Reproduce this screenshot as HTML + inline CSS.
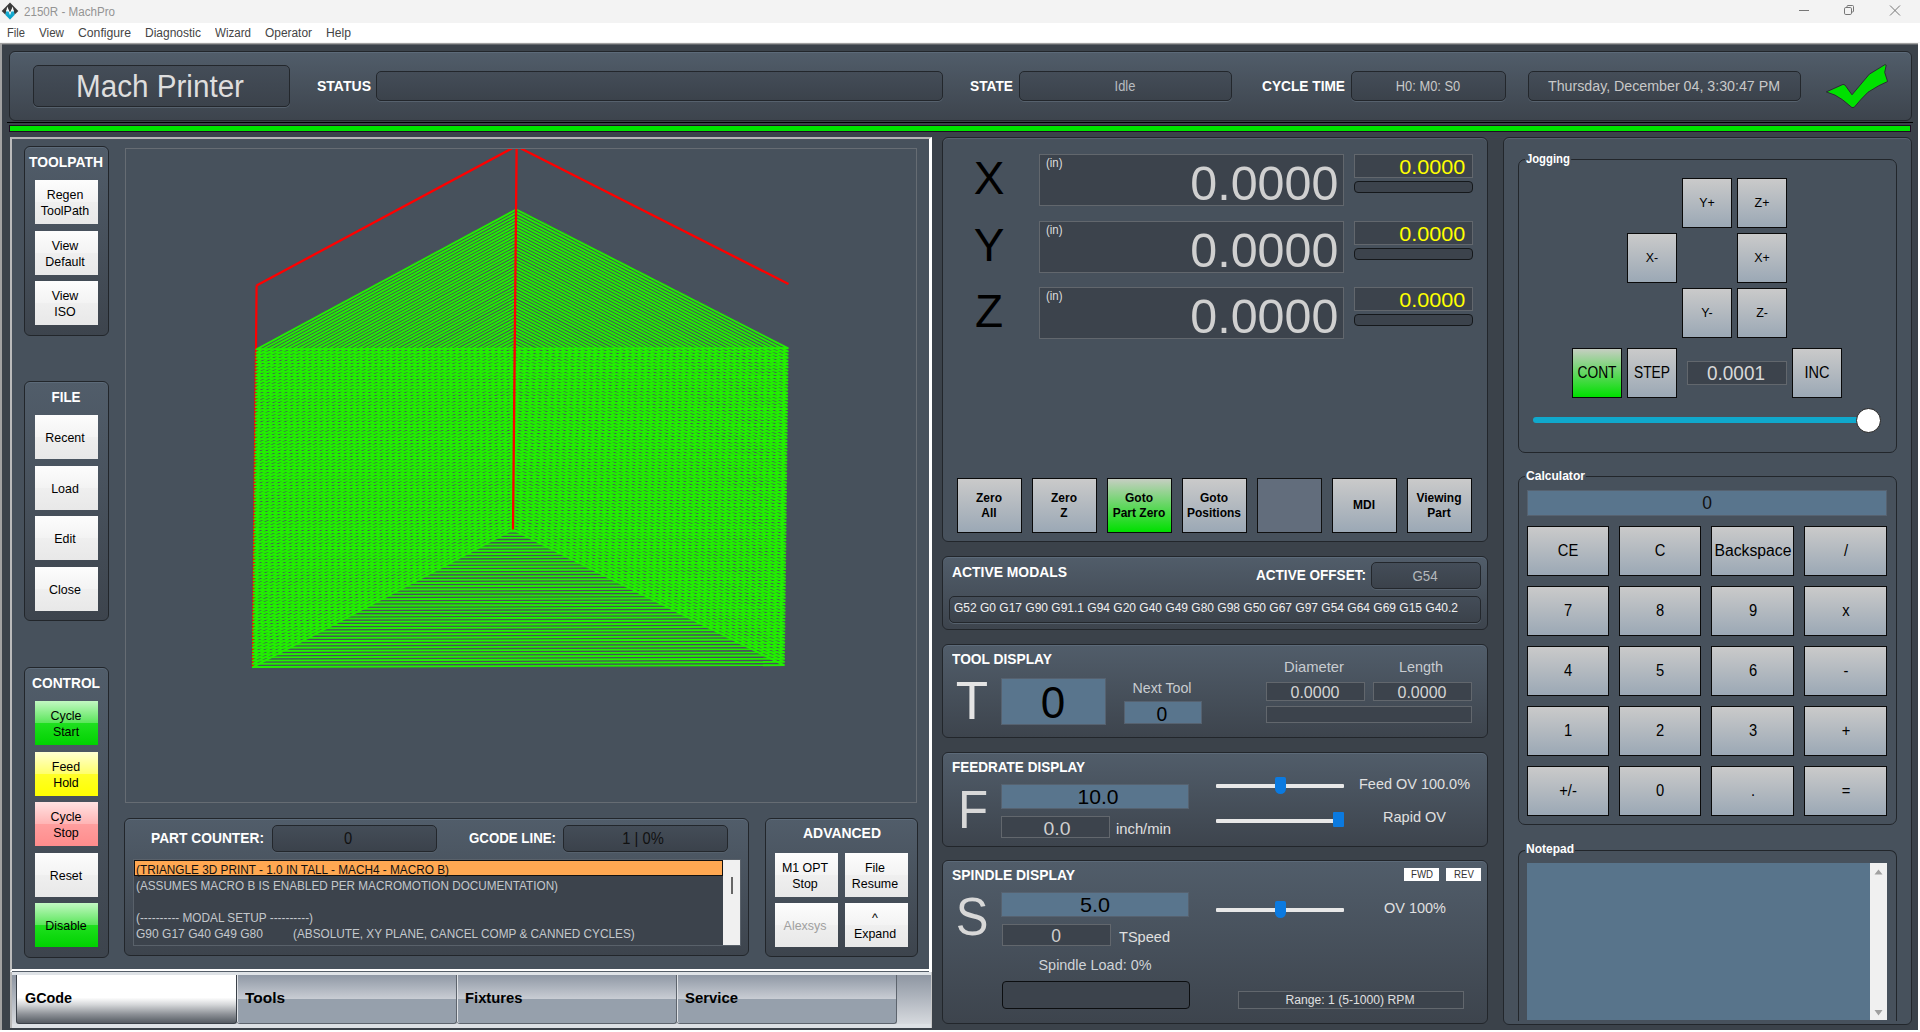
<!DOCTYPE html>
<html lang="en"><head><meta charset="utf-8"><title>2150R - MachPro</title>
<style>
html,body{margin:0;padding:0;}
body{width:1920px;height:1032px;overflow:hidden;position:relative;background:#fff;font-family:"Liberation Sans",sans-serif;}
div{position:absolute;box-sizing:border-box;}
.t{white-space:nowrap;}
.app{background:#3b424a;}
.panel{background:linear-gradient(#515d6a,#3d444d);border:1px solid #22262b;border-radius:6px;box-shadow:inset 0 1px 0 #5c6a79;}
.flat{background:#47515c;border:1px solid #22262b;border-radius:6px;box-shadow:inset 0 1px 0 #566270;}
.inset{background:linear-gradient(#444d58,#3b424b);border:1px solid #23272c;border-radius:5px;box-shadow:0 1px 0 #56616d;}
.dark{background:#3c434c;border:1px solid #62676d;}
.blue{background:#59758d;border:1px solid #566270;}
.wb{background:linear-gradient(#fdfdfd 0,#f3f3f3 50%,#efefef 50%,#e8e8e8 100%);}
.gb{background:linear-gradient(#cacaca,#9ba8b5);border:1px solid #0a0a0a;}
.grn{background:linear-gradient(#c2f8c2 0,#5ae65a 50%,#1fe01f 50%,#00d200 100%);}
.grnb{background:linear-gradient(#c6cec2,#00e000);border:1px solid #0a0a0a;}
.grp{border:1px solid #22262b;border-radius:7px;}
.c{display:flex;align-items:center;justify-content:center;text-align:center;}
svg{position:absolute;}

</style></head>
<body>
<div style="left:0px;top:0px;width:1920px;height:23px;background:#f3f3f3;"></div>
<div style="left:0px;top:23px;width:1920px;height:20px;background:#fff;"></div>
<svg style="left:0;top:0" width="21" height="23" viewBox="0 0 21 23"><defs><linearGradient id="ig" x1="0" y1="0" x2="0" y2="1"><stop offset="0" stop-color="#fff"/><stop offset="0.22" stop-color="#19acd2"/><stop offset="1" stop-color="#00a0c8"/></linearGradient></defs><path d="M10 2.6 L18.3 11 L10 19.3 L1.7 11 Z" fill="#3a3a3a"/><path d="M7.2 6.6 L10 12.4 L12.8 6.6 L14.5 15 L10 19.3 L5.5 15 Z" fill="#fff"/><path d="M6.2 10.3 L8.2 10.3 L10 15.2 L11.8 10.3 L13.8 10.3 L14.5 15 L10 19.4 L5.5 15 Z" fill="url(#ig)"/></svg>
<div class="t" style="top:6.28px;font-size:12.5px;line-height:12.5px;height:12.5px;color:#949494;left:24px;transform-origin:0 50%;transform:scaleX(0.9289);">2150R - MachPro</div>
<div class="t" style="top:27.07px;font-size:12.3px;line-height:12.3px;height:12.3px;color:#454545;left:7px;transform-origin:0 50%;transform:scaleX(0.9078);">File</div>
<div class="t" style="top:27.07px;font-size:12.3px;line-height:12.3px;height:12.3px;color:#454545;left:39px;transform-origin:0 50%;transform:scaleX(0.9456);">View</div>
<div class="t" style="top:27.07px;font-size:12.3px;line-height:12.3px;height:12.3px;color:#454545;left:78px;transform-origin:0 50%;transform:scaleX(0.9938);">Configure</div>
<div class="t" style="top:27.07px;font-size:12.3px;line-height:12.3px;height:12.3px;color:#454545;left:145px;transform-origin:0 50%;transform:scaleX(0.9752);">Diagnostic</div>
<div class="t" style="top:27.07px;font-size:12.3px;line-height:12.3px;height:12.3px;color:#454545;left:215px;transform-origin:0 50%;transform:scaleX(0.9408);">Wizard</div>
<div class="t" style="top:27.07px;font-size:12.3px;line-height:12.3px;height:12.3px;color:#454545;left:265px;transform-origin:0 50%;transform:scaleX(0.9684);">Operator</div>
<div class="t" style="top:27.07px;font-size:12.3px;line-height:12.3px;height:12.3px;color:#454545;left:326px;transform-origin:0 50%;transform:scaleX(0.9883);">Help</div>
<svg style="left:1790px;top:0" width="130" height="23" viewBox="0 0 130 23"><g fill="none" stroke="#777" stroke-width="1"><path d="M9 10.5 H19"/><rect x="54.5" y="7.5" width="7" height="7" rx="1.3"/><path d="M57 7.5 V6.5 Q57 5.5 58 5.5 H62.5 Q63.5 5.5 63.5 6.5 V11 Q63.5 12 62.5 12 H61.5"/><path d="M100 5.5 L110 15.5 M110 5.5 L100 15.5"/></g></svg>
<div style="left:0px;top:42px;width:1920px;height:1px;background:#f4f4f4;"></div>
<div class="app" style="left:0px;top:43px;width:1918px;height:987px;border-left:2px solid #a2a2a2;"></div>
<div style="left:0px;top:43px;width:1918px;height:1px;background:#a0a0a0;"></div>
<div style="left:2px;top:44px;width:1916px;height:1px;background:#62666b;"></div>
<div class="panel" style="left:9px;top:51px;width:1903px;height:70px;"></div>
<div class="inset" style="left:33px;top:65px;width:257px;height:42px;"></div>
<div class="t" style="top:71.06px;font-size:31px;line-height:31px;height:31px;color:#dedede;left:76px;transform-origin:0 50%;transform:scaleX(0.9560);">Mach Printer</div>
<div class="t" style="top:77.83px;font-size:15.5px;line-height:15.5px;height:15.5px;color:#fff;font-weight:700;left:317px;transform-origin:0 50%;transform:scaleX(0.9045);">STATUS</div>
<div class="inset" style="left:376px;top:71px;width:567px;height:30px;"></div>
<div class="t" style="top:77.83px;font-size:15.5px;line-height:15.5px;height:15.5px;color:#fff;font-weight:700;left:970px;transform-origin:0 50%;transform:scaleX(0.8863);">STATE</div>
<div class="inset" style="left:1019px;top:71px;width:213px;height:30px;"></div>
<div class="t" style="top:79.25px;font-size:14px;line-height:14px;height:14px;color:#b8bcc0;left:1125px;transform:translateX(-50%) scaleX(0.9200);">Idle</div>
<div class="t" style="top:77.83px;font-size:15.5px;line-height:15.5px;height:15.5px;color:#fff;font-weight:700;left:1262px;transform-origin:0 50%;transform:scaleX(0.8842);">CYCLE TIME</div>
<div class="inset" style="left:1351px;top:71px;width:155px;height:30px;"></div>
<div class="t" style="top:79.25px;font-size:14px;line-height:14px;height:14px;color:#c8c8c8;left:1428px;transform:translateX(-50%) scaleX(0.9200);">H0: M0: S0</div>
<div class="inset" style="left:1528px;top:71px;width:273px;height:30px;"></div>
<div class="t" style="top:79.25px;font-size:14px;line-height:14px;height:14px;color:#c8c8c8;left:1664px;transform:translateX(-50%) scaleX(1.0152);">Thursday, December 04, 3:30:47 PM</div>
<svg style="left:1822px;top:60px" width="72" height="52" viewBox="1822 60 72 52"><path d="M1826.3 91.9 L1843 84.4 L1845 85 L1852 94.8 L1869.3 74.2 L1885 64.6 L1886.2 65.2 L1884.7 72.4 L1887.6 81.5 L1878.6 85.8 L1868 92.2 L1861.2 99.2 L1854.2 107.3 L1852 107.6 L1842.6 99.8 L1835 95.1 Z" fill="#00e000" stroke="#2c2034" stroke-width="0.9" stroke-linejoin="round"/></svg>
<div style="left:7px;top:122px;width:1906px;height:1px;background:#000;"></div>
<div style="left:9px;top:125px;width:1902px;height:7px;background:#00e400;border:1px solid #1c0c22;"></div>
<div style="left:10px;top:137px;width:922px;height:835px;background:#47515c;border:2px solid #fff;border-top-color:#b4b4b4;border-left-color:#bcbcbc;border-right-width:3px;border-bottom-width:3px;"></div>
<div style="left:12px;top:971px;width:917px;height:1px;background:#555e68;"></div>
<div class="panel" style="left:24px;top:146px;width:85px;height:190px;"></div>
<div class="t" style="top:153.53px;font-size:15.5px;line-height:15.5px;height:15.5px;color:#fff;font-weight:700;left:66px;transform:translateX(-50%) scaleX(0.8951);">TOOLPATH</div>
<div class="wb" style="left:35px;top:180px;width:63px;height:44px;"></div>
<div class="t" style="top:188.49px;font-size:13.5px;line-height:13.5px;height:13.5px;color:#000;left:65px;transform:translateX(-50%) scaleX(0.9200);">Regen</div>
<div class="t" style="top:204.49px;font-size:13.5px;line-height:13.5px;height:13.5px;color:#000;left:65px;transform:translateX(-50%) scaleX(0.9200);">ToolPath</div>
<div class="wb" style="left:35px;top:231px;width:63px;height:44px;"></div>
<div class="t" style="top:239.49px;font-size:13.5px;line-height:13.5px;height:13.5px;color:#000;left:65px;transform:translateX(-50%) scaleX(0.9200);">View</div>
<div class="t" style="top:255.49px;font-size:13.5px;line-height:13.5px;height:13.5px;color:#000;left:65px;transform:translateX(-50%) scaleX(0.9200);">Default</div>
<div class="wb" style="left:35px;top:281px;width:63px;height:44px;"></div>
<div class="t" style="top:289.49px;font-size:13.5px;line-height:13.5px;height:13.5px;color:#000;left:65px;transform:translateX(-50%) scaleX(0.9200);">View</div>
<div class="t" style="top:305.49px;font-size:13.5px;line-height:13.5px;height:13.5px;color:#000;left:65px;transform:translateX(-50%) scaleX(0.9200);">ISO</div>
<div class="panel" style="left:24px;top:381px;width:85px;height:240px;"></div>
<div class="t" style="top:388.53px;font-size:15.5px;line-height:15.5px;height:15.5px;color:#fff;font-weight:700;left:66px;transform:translateX(-50%) scaleX(0.8633);">FILE</div>
<div class="wb" style="left:35px;top:415px;width:63px;height:44px;"></div>
<div class="t" style="top:431.49px;font-size:13.5px;line-height:13.5px;height:13.5px;color:#000;left:65px;transform:translateX(-50%) scaleX(0.9200);">Recent</div>
<div class="wb" style="left:35px;top:466px;width:63px;height:44px;"></div>
<div class="t" style="top:482.49px;font-size:13.5px;line-height:13.5px;height:13.5px;color:#000;left:65px;transform:translateX(-50%) scaleX(0.9200);">Load</div>
<div class="wb" style="left:35px;top:516px;width:63px;height:44px;"></div>
<div class="t" style="top:532.49px;font-size:13.5px;line-height:13.5px;height:13.5px;color:#000;left:65px;transform:translateX(-50%) scaleX(0.9200);">Edit</div>
<div class="wb" style="left:35px;top:567px;width:63px;height:44px;"></div>
<div class="t" style="top:583.49px;font-size:13.5px;line-height:13.5px;height:13.5px;color:#000;left:65px;transform:translateX(-50%) scaleX(0.9200);">Close</div>
<div class="panel" style="left:24px;top:667px;width:85px;height:291px;"></div>
<div class="t" style="top:674.53px;font-size:15.5px;line-height:15.5px;height:15.5px;color:#fff;font-weight:700;left:66px;transform:translateX(-50%) scaleX(0.8873);">CONTROL</div>
<div class="grn" style="left:35px;top:701px;width:63px;height:44px;"></div>
<div class="t" style="top:709.49px;font-size:13.5px;line-height:13.5px;height:13.5px;color:#000;left:65.5px;transform:translateX(-50%) scaleX(0.9200);">Cycle</div>
<div class="t" style="top:725.49px;font-size:13.5px;line-height:13.5px;height:13.5px;color:#000;left:65.5px;transform:translateX(-50%) scaleX(0.9200);">Start</div>
<div style="left:35px;top:752px;width:63px;height:44px;background:linear-gradient(#ffffd2 0,#ffff6a 50%,#ffff28 50%,#ffff00 100%);"></div>
<div class="t" style="top:760.49px;font-size:13.5px;line-height:13.5px;height:13.5px;color:#000;left:65.5px;transform:translateX(-50%) scaleX(0.9200);">Feed</div>
<div class="t" style="top:776.49px;font-size:13.5px;line-height:13.5px;height:13.5px;color:#000;left:65.5px;transform:translateX(-50%) scaleX(0.9200);">Hold</div>
<div style="left:35px;top:802px;width:63px;height:44px;background:linear-gradient(#ffe2e2 0,#ffb4b4 50%,#ff9e9e 50%,#ff8c8c 100%);"></div>
<div class="t" style="top:810.49px;font-size:13.5px;line-height:13.5px;height:13.5px;color:#000;left:65.5px;transform:translateX(-50%) scaleX(0.9200);">Cycle</div>
<div class="t" style="top:826.49px;font-size:13.5px;line-height:13.5px;height:13.5px;color:#000;left:65.5px;transform:translateX(-50%) scaleX(0.9200);">Stop</div>
<div class="wb" style="left:35px;top:853px;width:63px;height:44px;"></div>
<div class="t" style="top:869.49px;font-size:13.5px;line-height:13.5px;height:13.5px;color:#000;left:65.5px;transform:translateX(-50%) scaleX(0.9200);">Reset</div>
<div class="grn" style="left:35px;top:903px;width:63px;height:44px;"></div>
<div class="t" style="top:919.49px;font-size:13.5px;line-height:13.5px;height:13.5px;color:#000;left:65.5px;transform:translateX(-50%) scaleX(0.9200);">Disable</div>
<div style="left:125px;top:148px;width:792px;height:655px;border:1px solid #666c73;background:#47515c;"></div>
<svg style="left:126px;top:149px" width="790" height="653" viewBox="126 149 790 653">
<path d="M256.6 285.5 L252.9 667" fill="none" stroke="#ff0000" stroke-width="2.2"/>
<g fill="none" stroke="#22f000" stroke-width="1.9" stroke-linejoin="round">
<path d="M512.7 529.4L252.8 667.0L784.0 665.1Z"/>
<path d="M512.7 526.2L252.8 663.8L784.0 661.9Z"/>
<path d="M512.8 522.9L252.9 660.6L784.1 658.7Z"/>
<path d="M512.8 519.7L252.9 657.4L784.1 655.5Z"/>
<path d="M512.8 516.5L252.9 654.2L784.2 652.3Z"/>
<path d="M512.9 513.2L253.0 651.0L784.2 649.1Z"/>
<path d="M512.9 510.0L253.0 647.7L784.2 645.9Z"/>
<path d="M512.9 506.8L253.1 644.5L784.3 642.7Z"/>
<path d="M513.0 503.5L253.1 641.3L784.3 639.5Z"/>
<path d="M513.0 500.3L253.1 638.1L784.3 636.3Z"/>
<path d="M513.1 497.1L253.2 634.9L784.4 633.1Z"/>
<path d="M513.1 493.9L253.2 631.7L784.4 629.9Z"/>
<path d="M513.1 490.6L253.2 628.5L784.5 626.7Z"/>
<path d="M513.2 487.4L253.3 625.3L784.5 623.5Z"/>
<path d="M513.2 484.2L253.3 622.1L784.5 620.3Z"/>
<path d="M513.2 480.9L253.4 618.9L784.6 617.1Z"/>
<path d="M513.3 477.7L253.4 615.7L784.6 613.9Z"/>
<path d="M513.3 474.5L253.4 612.4L784.7 610.7Z"/>
<path d="M513.3 471.2L253.5 609.2L784.7 607.5Z"/>
<path d="M513.4 468.0L253.5 606.0L784.7 604.3Z"/>
<path d="M513.4 464.8L253.5 602.8L784.8 601.1Z"/>
<path d="M513.4 461.5L253.6 599.6L784.8 597.9Z"/>
<path d="M513.5 458.3L253.6 596.4L784.8 594.7Z"/>
<path d="M513.5 455.1L253.7 593.2L784.9 591.5Z"/>
<path d="M513.5 451.8L253.7 590.0L784.9 588.3Z"/>
<path d="M513.6 448.6L253.7 586.8L785.0 585.1Z"/>
<path d="M513.6 445.4L253.8 583.6L785.0 581.9Z"/>
<path d="M513.7 442.2L253.8 580.4L785.0 578.7Z"/>
<path d="M513.7 438.9L253.8 577.1L785.1 575.5Z"/>
<path d="M513.7 435.7L253.9 573.9L785.1 572.3Z"/>
<path d="M513.8 432.5L253.9 570.7L785.2 569.1Z"/>
<path d="M513.8 429.2L254.0 567.5L785.2 565.9Z"/>
<path d="M513.8 426.0L254.0 564.3L785.2 562.7Z"/>
<path d="M513.9 422.8L254.0 561.1L785.3 559.5Z"/>
<path d="M513.9 419.5L254.1 557.9L785.3 556.3Z"/>
<path d="M513.9 416.3L254.1 554.7L785.3 553.1Z"/>
<path d="M514.0 413.1L254.1 551.5L785.4 549.9Z"/>
<path d="M514.0 409.8L254.2 548.3L785.4 546.7Z"/>
<path d="M514.0 406.6L254.2 545.1L785.5 543.5Z"/>
<path d="M514.1 403.4L254.3 541.8L785.5 540.3Z"/>
<path d="M514.1 400.1L254.3 538.6L785.5 537.1Z"/>
<path d="M514.1 396.9L254.3 535.4L785.6 533.9Z"/>
<path d="M514.2 393.7L254.4 532.2L785.6 530.7Z"/>
<path d="M514.2 390.5L254.4 529.0L785.7 527.5Z"/>
<path d="M514.3 387.2L254.4 525.8L785.7 524.3Z"/>
<path d="M514.3 384.0L254.5 522.6L785.7 521.1Z"/>
<path d="M514.3 380.8L254.5 519.4L785.8 517.9Z"/>
<path d="M514.4 377.5L254.6 516.2L785.8 514.7Z"/>
<path d="M514.4 374.3L254.6 513.0L785.8 511.5Z"/>
<path d="M514.4 371.1L254.6 509.8L785.9 508.3Z"/>
<path d="M514.5 367.8L254.7 506.5L785.9 505.0Z"/>
<path d="M514.5 364.6L254.7 503.3L786.0 501.8Z"/>
<path d="M514.5 361.4L254.7 500.1L786.0 498.6Z"/>
<path d="M514.6 358.1L254.8 496.9L786.0 495.4Z"/>
<path d="M514.6 354.9L254.8 493.7L786.1 492.2Z"/>
<path d="M514.6 351.7L254.9 490.5L786.1 489.0Z"/>
<path d="M514.7 348.4L254.9 487.3L786.1 485.8Z"/>
<path d="M514.7 345.2L254.9 484.1L786.2 482.6Z"/>
<path d="M514.8 342.0L255.0 480.9L786.2 479.4Z"/>
<path d="M514.8 338.8L255.0 477.7L786.3 476.2Z"/>
<path d="M514.8 335.5L255.0 474.5L786.3 473.0Z"/>
<path d="M514.9 332.3L255.1 471.2L786.3 469.8Z"/>
<path d="M514.9 329.1L255.1 468.0L786.4 466.6Z"/>
<path d="M514.9 325.8L255.2 464.8L786.4 463.4Z"/>
<path d="M515.0 322.6L255.2 461.6L786.5 460.2Z"/>
<path d="M515.0 319.4L255.2 458.4L786.5 457.0Z"/>
<path d="M515.0 316.1L255.3 455.2L786.5 453.8Z"/>
<path d="M515.1 312.9L255.3 452.0L786.6 450.6Z"/>
<path d="M515.1 309.7L255.3 448.8L786.6 447.4Z"/>
<path d="M515.1 306.4L255.4 445.6L786.6 444.2Z"/>
<path d="M515.2 303.2L255.4 442.4L786.7 441.0Z"/>
<path d="M515.2 300.0L255.5 439.2L786.7 437.8Z"/>
<path d="M515.2 296.7L255.5 435.9L786.8 434.6Z"/>
<path d="M515.3 293.5L255.5 432.7L786.8 431.4Z"/>
<path d="M515.3 290.3L255.6 429.5L786.8 428.2Z"/>
<path d="M515.4 287.1L255.6 426.3L786.9 425.0Z"/>
<path d="M515.4 283.8L255.6 423.1L786.9 421.8Z"/>
<path d="M515.4 280.6L255.7 419.9L787.0 418.6Z"/>
<path d="M515.5 277.4L255.7 416.7L787.0 415.4Z"/>
<path d="M515.5 274.1L255.8 413.5L787.0 412.2Z"/>
<path d="M515.5 270.9L255.8 410.3L787.1 409.0Z"/>
<path d="M515.6 267.7L255.8 407.1L787.1 405.8Z"/>
<path d="M515.6 264.4L255.9 403.9L787.1 402.6Z"/>
<path d="M515.6 261.2L255.9 400.6L787.2 399.4Z"/>
<path d="M515.7 258.0L255.9 397.4L787.2 396.2Z"/>
<path d="M515.7 254.7L256.0 394.2L787.3 393.0Z"/>
<path d="M515.7 251.5L256.0 391.0L787.3 389.8Z"/>
<path d="M515.8 248.3L256.1 387.8L787.3 386.6Z"/>
<path d="M515.8 245.0L256.1 384.6L787.4 383.4Z"/>
<path d="M515.8 241.8L256.1 381.4L787.4 380.2Z"/>
<path d="M515.9 238.6L256.2 378.2L787.5 377.0Z"/>
<path d="M515.9 235.4L256.2 375.0L787.5 373.8Z"/>
<path d="M516.0 232.1L256.2 371.8L787.5 370.6Z"/>
<path d="M516.0 228.9L256.3 368.6L787.6 367.4Z"/>
<path d="M516.0 225.7L256.3 365.3L787.6 364.2Z"/>
<path d="M516.1 222.4L256.4 362.1L787.6 361.0Z"/>
<path d="M516.1 219.2L256.4 358.9L787.7 357.8Z"/>
<path d="M516.1 216.0L256.4 355.7L787.7 354.6Z"/>
<path d="M516.2 212.7L256.5 352.5L787.8 351.4Z"/>
<path d="M516.2 209.5L256.5 349.3L787.8 348.2Z"/>
</g>
<g fill="none" stroke="#ff0000" stroke-width="2.3">
<path d="M788.5 284 L521 148.5 M516.7 140 L513 529.4 M516.3 146 L256.6 285.5"/>
</g></svg>
<div class="panel" style="left:124px;top:818px;width:625px;height:138px;"></div>
<div class="t" style="top:829.73px;font-size:15.5px;line-height:15.5px;height:15.5px;color:#fff;font-weight:700;left:151px;transform-origin:0 50%;transform:scaleX(0.8887);">PART COUNTER:</div>
<div class="inset" style="left:272px;top:825px;width:165px;height:27px;"></div>
<div class="t" style="top:831.29px;font-size:16px;line-height:16px;height:16px;color:#111;left:348px;transform:translateX(-50%) scaleX(0.9200);">0</div>
<div class="t" style="top:829.73px;font-size:15.5px;line-height:15.5px;height:15.5px;color:#fff;font-weight:700;left:469px;transform-origin:0 50%;transform:scaleX(0.8561);">GCODE LINE:</div>
<div class="inset" style="left:563px;top:825px;width:165px;height:27px;"></div>
<div class="t" style="top:831.29px;font-size:16px;line-height:16px;height:16px;color:#111;left:643px;transform:translateX(-50%) scaleX(0.9200);">1 | 0%</div>
<div style="left:133px;top:859px;width:608px;height:87px;background:#3c434c;border:1px solid #59616a;"></div>
<div style="left:134px;top:860px;width:589px;height:16px;background:#ffa852;border:1px solid #111;"></div>
<div style="left:723px;top:860px;width:17px;height:85px;background:#f0f0f0;"></div>
<div style="left:731px;top:877px;width:2px;height:17px;background:#666;"></div>
<div class="t" style="top:863.77px;font-size:12.5px;line-height:12.5px;height:12.5px;color:#111;left:136px;transform-origin:0 50%;transform:scaleX(0.9441);">(TRIANGLE 3D PRINT - 1.0 IN TALL - MACH4 - MACRO B)</div>
<div class="t" style="top:880.27px;font-size:12.5px;line-height:12.5px;height:12.5px;color:#c4c8cc;left:136px;transform-origin:0 50%;transform:scaleX(0.9387);">(ASSUMES MACRO B IS ENABLED PER MACROMOTION DOCUMENTATION)</div>
<div class="t" style="top:912.27px;font-size:12.5px;line-height:12.5px;height:12.5px;color:#c4c8cc;left:136px;transform-origin:0 50%;transform:scaleX(0.9443);">(---------- MODAL SETUP ----------)</div>
<div class="t" style="top:928.27px;font-size:12.5px;line-height:12.5px;height:12.5px;color:#c4c8cc;left:136px;transform-origin:0 50%;transform:scaleX(0.9619);">G90 G17 G40 G49 G80</div>
<div class="t" style="top:928.27px;font-size:12.5px;line-height:12.5px;height:12.5px;color:#c4c8cc;left:293.3px;transform-origin:0 50%;transform:scaleX(0.9429);">(ABSOLUTE, XY PLANE, CANCEL COMP &amp; CANNED CYCLES)</div>
<div class="panel" style="left:765px;top:818px;width:153px;height:139px;"></div>
<div class="t" style="top:825.23px;font-size:15.5px;line-height:15.5px;height:15.5px;color:#fff;font-weight:700;left:842px;transform:translateX(-50%) scaleX(0.8996);">ADVANCED</div>
<div class="wb" style="left:775px;top:853px;width:63px;height:44px;"></div>
<div class="t" style="top:860.99px;font-size:13.5px;line-height:13.5px;height:13.5px;color:#000;left:805px;transform:translateX(-50%) scaleX(0.9200);">M1 OPT</div>
<div class="t" style="top:876.99px;font-size:13.5px;line-height:13.5px;height:13.5px;color:#000;left:805px;transform:translateX(-50%) scaleX(0.9200);">Stop</div>
<div class="wb" style="left:845px;top:853px;width:63px;height:44px;"></div>
<div class="t" style="top:860.99px;font-size:13.5px;line-height:13.5px;height:13.5px;color:#000;left:875px;transform:translateX(-50%) scaleX(0.9200);">File</div>
<div class="t" style="top:876.99px;font-size:13.5px;line-height:13.5px;height:13.5px;color:#000;left:875px;transform:translateX(-50%) scaleX(0.9200);">Resume</div>
<div class="wb" style="left:775px;top:903px;width:63px;height:44px;"></div>
<div class="t" style="top:919.49px;font-size:13.5px;line-height:13.5px;height:13.5px;color:#a0a0a0;left:805px;transform:translateX(-50%) scaleX(0.9200);">Alexsys</div>
<div class="wb" style="left:845px;top:903px;width:63px;height:44px;"></div>
<div class="t" style="top:911.49px;font-size:13.5px;line-height:13.5px;height:13.5px;color:#000;left:875px;transform:translateX(-50%) scaleX(0.9200);">^</div>
<div class="t" style="top:927.49px;font-size:13.5px;line-height:13.5px;height:13.5px;color:#000;left:875px;transform:translateX(-50%) scaleX(0.9200);">Expand</div>
<div style="left:10px;top:972px;width:922px;height:56px;background:linear-gradient(#dfe3e7 0,#dfe3e7 3px,#8e96a2 3px,#dcdfe3 100%);border-left:2px solid #b8b8b8;border-right:1px solid #c8c8c8;"></div>
<div style="left:12px;top:1024px;width:919px;height:4px;background:#dde1e5;"></div>
<div style="left:16px;top:975px;width:221px;height:49px;background:linear-gradient(#fff 47%,#d4d6d8 62%,#8c9096 82%,#555b62 100%);border:1px solid #3a4048;border-top:none;border-radius:0 0 3px 3px;"></div>
<div class="t" style="top:990.13px;font-size:15.5px;line-height:15.5px;height:15.5px;color:#000;font-weight:700;left:24.5px;transform-origin:0 50%;transform:scaleX(0.9250);">GCode</div>
<div style="left:237px;top:975px;width:220px;height:49px;background:linear-gradient(#8f98a5,#c9cdd4 50%,#96a0ac 50%,#96a0ac 100%);border-right:1px solid #5d646d;border-bottom:1px solid #5d646d;border-radius:0 0 3px 3px;box-shadow:inset 1px 0 0 #dfe2e6;"></div>
<div class="t" style="top:990.13px;font-size:15.5px;line-height:15.5px;height:15.5px;color:#000;font-weight:700;left:244.5px;transform-origin:0 50%;transform:scaleX(0.9953);">Tools</div>
<div style="left:457px;top:975px;width:220px;height:49px;background:linear-gradient(#8f98a5,#c9cdd4 50%,#96a0ac 50%,#96a0ac 100%);border-right:1px solid #5d646d;border-bottom:1px solid #5d646d;border-radius:0 0 3px 3px;box-shadow:inset 1px 0 0 #dfe2e6;"></div>
<div class="t" style="top:990.13px;font-size:15.5px;line-height:15.5px;height:15.5px;color:#000;font-weight:700;left:464.5px;transform-origin:0 50%;transform:scaleX(0.9534);">Fixtures</div>
<div style="left:677px;top:975px;width:220px;height:49px;background:linear-gradient(#8f98a5,#c9cdd4 50%,#96a0ac 50%,#96a0ac 100%);border-right:1px solid #5d646d;border-bottom:1px solid #5d646d;border-radius:0 0 3px 3px;box-shadow:inset 1px 0 0 #dfe2e6;"></div>
<div class="t" style="top:990.13px;font-size:15.5px;line-height:15.5px;height:15.5px;color:#000;font-weight:700;left:684.5px;transform-origin:0 50%;transform:scaleX(0.9606);">Service</div>
<div class="flat" style="left:942px;top:137px;width:546px;height:405px;"></div>
<div class="t" style="top:155.33px;font-size:46px;line-height:46px;height:46px;color:#000;left:989px;transform:translateX(-50%) scaleX(1.0000);">X</div>
<div class="dark" style="left:1039px;top:154px;width:305px;height:52px;"></div>
<div class="t" style="top:157.02px;font-size:12px;line-height:12px;height:12px;color:#ddd;left:1045.5px;transform-origin:0 50%;transform:scaleX(0.9500);">(in)</div>
<div class="t" style="top:158.62px;font-size:48.5px;line-height:48.5px;height:48.5px;color:#d0d0d0;right:582px;transform-origin:100% 50%;transform:scaleX(0.9977);">0.0000</div>
<div class="dark" style="left:1354px;top:154px;width:119px;height:24px;"></div>
<div class="t" style="top:157.06px;font-size:20px;line-height:20px;height:20px;color:#ffff00;right:455px;transform-origin:100% 50%;transform:scaleX(1.0789);">0.0000</div>
<div style="left:1354px;top:181px;width:119px;height:12px;background:#3c434c;border:1px solid #15181b;border-radius:4px;"></div>
<div class="t" style="top:222.33px;font-size:46px;line-height:46px;height:46px;color:#000;left:989px;transform:translateX(-50%) scaleX(1.0000);">Y</div>
<div class="dark" style="left:1039px;top:221px;width:305px;height:52px;"></div>
<div class="t" style="top:224.02px;font-size:12px;line-height:12px;height:12px;color:#ddd;left:1045.5px;transform-origin:0 50%;transform:scaleX(0.9500);">(in)</div>
<div class="t" style="top:225.62px;font-size:48.5px;line-height:48.5px;height:48.5px;color:#d0d0d0;right:582px;transform-origin:100% 50%;transform:scaleX(0.9977);">0.0000</div>
<div class="dark" style="left:1354px;top:221px;width:119px;height:24px;"></div>
<div class="t" style="top:224.06px;font-size:20px;line-height:20px;height:20px;color:#ffff00;right:455px;transform-origin:100% 50%;transform:scaleX(1.0789);">0.0000</div>
<div style="left:1354px;top:248px;width:119px;height:12px;background:#3c434c;border:1px solid #15181b;border-radius:4px;"></div>
<div class="t" style="top:288.33px;font-size:46px;line-height:46px;height:46px;color:#000;left:989px;transform:translateX(-50%) scaleX(1.0000);">Z</div>
<div class="dark" style="left:1039px;top:287px;width:305px;height:52px;"></div>
<div class="t" style="top:290.02px;font-size:12px;line-height:12px;height:12px;color:#ddd;left:1045.5px;transform-origin:0 50%;transform:scaleX(0.9500);">(in)</div>
<div class="t" style="top:291.62px;font-size:48.5px;line-height:48.5px;height:48.5px;color:#d0d0d0;right:582px;transform-origin:100% 50%;transform:scaleX(0.9977);">0.0000</div>
<div class="dark" style="left:1354px;top:287px;width:119px;height:24px;"></div>
<div class="t" style="top:290.06px;font-size:20px;line-height:20px;height:20px;color:#ffff00;right:455px;transform-origin:100% 50%;transform:scaleX(1.0789);">0.0000</div>
<div style="left:1354px;top:314px;width:119px;height:12px;background:#3c434c;border:1px solid #15181b;border-radius:4px;"></div>
<div class="gb" style="left:957px;top:478px;width:65px;height:55px;"></div>
<div class="t" style="top:490.93px;font-size:13px;line-height:13px;height:13px;color:#000;font-weight:700;left:989px;transform:translateX(-50%) scaleX(0.9200);">Zero</div>
<div class="t" style="top:505.93px;font-size:13px;line-height:13px;height:13px;color:#000;font-weight:700;left:989px;transform:translateX(-50%) scaleX(0.9200);">All</div>
<div class="gb" style="left:1032px;top:478px;width:65px;height:55px;"></div>
<div class="t" style="top:490.93px;font-size:13px;line-height:13px;height:13px;color:#000;font-weight:700;left:1064px;transform:translateX(-50%) scaleX(0.9200);">Zero</div>
<div class="t" style="top:505.93px;font-size:13px;line-height:13px;height:13px;color:#000;font-weight:700;left:1064px;transform:translateX(-50%) scaleX(0.9200);">Z</div>
<div class="grnb" style="left:1107px;top:478px;width:65px;height:55px;"></div>
<div class="t" style="top:490.93px;font-size:13px;line-height:13px;height:13px;color:#000;font-weight:700;left:1139px;transform:translateX(-50%) scaleX(0.9200);">Goto</div>
<div class="t" style="top:505.93px;font-size:13px;line-height:13px;height:13px;color:#000;font-weight:700;left:1139px;transform:translateX(-50%) scaleX(0.9200);">Part Zero</div>
<div class="gb" style="left:1182px;top:478px;width:65px;height:55px;"></div>
<div class="t" style="top:490.93px;font-size:13px;line-height:13px;height:13px;color:#000;font-weight:700;left:1214px;transform:translateX(-50%) scaleX(0.9200);">Goto</div>
<div class="t" style="top:505.93px;font-size:13px;line-height:13px;height:13px;color:#000;font-weight:700;left:1214px;transform:translateX(-50%) scaleX(0.9200);">Positions</div>
<div style="left:1257px;top:478px;width:65px;height:55px;background:#626d7c;border:1px solid #111;"></div>
<div class="gb" style="left:1332px;top:478px;width:65px;height:55px;"></div>
<div class="t" style="top:498.43px;font-size:13px;line-height:13px;height:13px;color:#000;font-weight:700;left:1364px;transform:translateX(-50%) scaleX(0.9200);">MDI</div>
<div class="gb" style="left:1407px;top:478px;width:65px;height:55px;"></div>
<div class="t" style="top:490.93px;font-size:13px;line-height:13px;height:13px;color:#000;font-weight:700;left:1439px;transform:translateX(-50%) scaleX(0.9200);">Viewing</div>
<div class="t" style="top:505.93px;font-size:13px;line-height:13px;height:13px;color:#000;font-weight:700;left:1439px;transform:translateX(-50%) scaleX(0.9200);">Part</div>
<div class="panel" style="left:942px;top:556px;width:546px;height:74px;"></div>
<div class="t" style="top:563.93px;font-size:15.5px;line-height:15.5px;height:15.5px;color:#fff;font-weight:700;left:952px;transform-origin:0 50%;transform:scaleX(0.8962);">ACTIVE MODALS</div>
<div class="t" style="top:566.93px;font-size:15.5px;line-height:15.5px;height:15.5px;color:#fff;font-weight:700;left:1256px;transform-origin:0 50%;transform:scaleX(0.8749);">ACTIVE OFFSET:</div>
<div class="inset" style="left:1371px;top:562px;width:110px;height:27px;"></div>
<div class="t" style="top:569.01px;font-size:14.5px;line-height:14.5px;height:14.5px;color:#b4b8bc;left:1425px;transform:translateX(-50%) scaleX(0.9200);">G54</div>
<div class="inset" style="left:949px;top:596px;width:532px;height:27px;"></div>
<div class="t" style="top:601.98px;font-size:12.5px;line-height:12.5px;height:12.5px;color:#f0f0f0;left:954px;transform-origin:0 50%;transform:scaleX(0.9594);">G52 G0 G17 G90 G91.1 G94 G20 G40 G49 G80 G98 G50 G67 G97 G54 G64 G69 G15 G40.2</div>
<div class="panel" style="left:942px;top:644px;width:546px;height:94px;"></div>
<div class="t" style="top:651.13px;font-size:15.5px;line-height:15.5px;height:15.5px;color:#fff;font-weight:700;left:952px;transform-origin:0 50%;transform:scaleX(0.8884);">TOOL DISPLAY</div>
<div class="t" style="top:673.95px;font-size:53px;line-height:53px;height:53px;color:#e4e4e4;left:972px;transform:translateX(-50%) scaleX(1.0000);">T</div>
<div class="blue" style="left:1001px;top:678px;width:105px;height:47px;"></div>
<div class="t" style="top:681.29px;font-size:44px;line-height:44px;height:44px;color:#000;left:1053px;transform:translateX(-50%) scaleX(1.0000);">0</div>
<div class="t" style="top:679.97px;font-size:15px;line-height:15px;height:15px;color:#c8ccd0;left:1162px;transform:translateX(-50%) scaleX(0.9476);">Next Tool</div>
<div class="blue" style="left:1124px;top:701px;width:78px;height:23px;"></div>
<div class="t" style="top:703.38px;font-size:21px;line-height:21px;height:21px;color:#000;left:1162px;transform:translateX(-50%) scaleX(0.9200);">0</div>
<div class="t" style="top:658.57px;font-size:15px;line-height:15px;height:15px;color:#c8ccd0;left:1314px;transform:translateX(-50%) scaleX(0.9859);">Diameter</div>
<div class="t" style="top:658.57px;font-size:15px;line-height:15px;height:15px;color:#c8ccd0;left:1421px;transform:translateX(-50%) scaleX(0.9588);">Length</div>
<div class="dark" style="left:1266px;top:682px;width:99px;height:19px;"></div>
<div class="t" style="top:685.29px;font-size:16px;line-height:16px;height:16px;color:#d4d4d4;left:1315px;transform:translateX(-50%) scaleX(1.0013);">0.0000</div>
<div class="dark" style="left:1373px;top:682px;width:99px;height:19px;"></div>
<div class="t" style="top:685.29px;font-size:16px;line-height:16px;height:16px;color:#d4d4d4;left:1422px;transform:translateX(-50%) scaleX(1.0013);">0.0000</div>
<div class="dark" style="left:1266px;top:706px;width:206px;height:17px;"></div>
<div class="panel" style="left:942px;top:752px;width:546px;height:95px;"></div>
<div class="t" style="top:759.13px;font-size:15.5px;line-height:15.5px;height:15.5px;color:#fff;font-weight:700;left:952px;transform-origin:0 50%;transform:scaleX(0.8724);">FEEDRATE DISPLAY</div>
<div class="t" style="top:782.75px;font-size:53px;line-height:53px;height:53px;color:#d8d8d8;left:972.5px;transform:translateX(-50%) scaleX(0.9300);">F</div>
<div class="blue" style="left:1001px;top:784px;width:188px;height:25px;"></div>
<div class="t" style="top:786.38px;font-size:21px;line-height:21px;height:21px;color:#000;left:1098px;transform:translateX(-50%) scaleX(1.0031);">10.0</div>
<div class="dark" style="left:1001px;top:816px;width:109px;height:22px;"></div>
<div class="t" style="top:818.84px;font-size:19px;line-height:19px;height:19px;color:#d0d0d0;left:1057px;transform:translateX(-50%) scaleX(1.0219);">0.0</div>
<div class="t" style="top:820.77px;font-size:15px;line-height:15px;height:15px;color:#e0e0e0;left:1116px;transform-origin:0 50%;transform:scaleX(0.9846);">inch/min</div>
<div style="left:1216px;top:784px;width:128px;height:4px;background:#e8e8e8;border-radius:1px;"></div>
<div style="left:1275px;top:777px;width:11px;height:17px;background:#0b7ae0;border-radius:2px 2px 6px 6px;"></div>
<div class="t" style="top:776.47px;font-size:15px;line-height:15px;height:15px;color:#e0e0e0;left:1359px;transform-origin:0 50%;transform:scaleX(0.9646);">Feed OV 100.0%</div>
<div style="left:1216px;top:819px;width:128px;height:4px;background:#e8e8e8;border-radius:1px;"></div>
<div style="left:1333px;top:812px;width:11px;height:15px;background:#0b7ae0;border-radius:1px;"></div>
<div class="t" style="top:809.47px;font-size:15px;line-height:15px;height:15px;color:#e0e0e0;left:1383px;transform-origin:0 50%;transform:scaleX(0.9685);">Rapid OV</div>
<div class="panel" style="left:942px;top:860px;width:546px;height:164px;"></div>
<div class="t" style="top:867.13px;font-size:15.5px;line-height:15.5px;height:15.5px;color:#fff;font-weight:700;left:952px;transform-origin:0 50%;transform:scaleX(0.8962);">SPINDLE DISPLAY</div>
<div class="t" style="top:890.03px;font-size:54.5px;line-height:54.5px;height:54.5px;color:#d8d8d8;left:972px;transform:translateX(-50%) scaleX(0.9000);">S</div>
<div class="blue" style="left:1001px;top:892px;width:188px;height:25px;"></div>
<div class="t" style="top:894.38px;font-size:21px;line-height:21px;height:21px;color:#000;left:1095px;transform:translateX(-50%) scaleX(1.0273);">5.0</div>
<div class="dark" style="left:1002px;top:924px;width:109px;height:22px;"></div>
<div class="t" style="top:926.14px;font-size:19px;line-height:19px;height:19px;color:#d0d0d0;left:1056px;transform:translateX(-50%) scaleX(0.9200);">0</div>
<div class="t" style="top:928.57px;font-size:15px;line-height:15px;height:15px;color:#e0e0e0;left:1119px;transform-origin:0 50%;transform:scaleX(0.9706);">TSpeed</div>
<div style="left:1216px;top:908px;width:128px;height:4px;background:#e8e8e8;border-radius:1px;"></div>
<div style="left:1275px;top:901px;width:11px;height:17px;background:#0b7ae0;border-radius:2px 2px 6px 6px;"></div>
<div class="t" style="top:900.47px;font-size:15px;line-height:15px;height:15px;color:#e0e0e0;left:1384px;transform-origin:0 50%;transform:scaleX(0.9655);">OV 100%</div>
<div style="left:1404px;top:868px;width:35px;height:13px;background:#fff;"></div>
<div class="t" style="top:868.94px;font-size:10.5px;line-height:10.5px;height:10.5px;color:#333;left:1421.5px;transform:translateX(-50%) scaleX(0.9200);">FWD</div>
<div style="left:1446px;top:868px;width:35px;height:13px;background:#fff;"></div>
<div class="t" style="top:868.94px;font-size:10.5px;line-height:10.5px;height:10.5px;color:#333;left:1463.5px;transform:translateX(-50%) scaleX(0.9200);">REV</div>
<div class="t" style="top:956.77px;font-size:15px;line-height:15px;height:15px;color:#d0d4d8;left:1095px;transform:translateX(-50%) scaleX(0.9609);">Spindle Load: 0%</div>
<div style="left:1002px;top:981px;width:188px;height:28px;background:#3c434c;border:1px solid #0c0e10;border-radius:4px;"></div>
<div class="dark" style="left:1238px;top:991px;width:226px;height:18px;"></div>
<div class="t" style="top:993.98px;font-size:12.5px;line-height:12.5px;height:12.5px;color:#e0e0e0;left:1350px;transform:translateX(-50%) scaleX(0.9721);">Range: 1 (5-1000) RPM</div>
<div class="flat" style="left:1503px;top:137px;width:409px;height:888px;"></div>
<div class="grp" style="left:1518px;top:159px;width:379px;height:294px;"></div>
<div class="t" style="top:152.97px;font-size:12.5px;line-height:12.5px;height:12.5px;color:#fff;font-weight:700;left:1525px;transform-origin:0 50%;transform:scaleX(0.9052);background:#47515c;padding:0 1px;">Jogging</div>
<div class="gb" style="left:1682px;top:178px;width:50px;height:50px;"></div>
<div class="t" style="top:196.49px;font-size:13.5px;line-height:13.5px;height:13.5px;color:#000;left:1707px;transform:translateX(-50%) scaleX(0.9200);">Y+</div>
<div class="gb" style="left:1737px;top:178px;width:50px;height:50px;"></div>
<div class="t" style="top:196.49px;font-size:13.5px;line-height:13.5px;height:13.5px;color:#000;left:1762px;transform:translateX(-50%) scaleX(0.9200);">Z+</div>
<div class="gb" style="left:1627px;top:233px;width:50px;height:50px;"></div>
<div class="t" style="top:251.49px;font-size:13.5px;line-height:13.5px;height:13.5px;color:#000;left:1652px;transform:translateX(-50%) scaleX(0.9200);">X-</div>
<div class="gb" style="left:1737px;top:233px;width:50px;height:50px;"></div>
<div class="t" style="top:251.49px;font-size:13.5px;line-height:13.5px;height:13.5px;color:#000;left:1762px;transform:translateX(-50%) scaleX(0.9200);">X+</div>
<div class="gb" style="left:1682px;top:288px;width:50px;height:50px;"></div>
<div class="t" style="top:306.49px;font-size:13.5px;line-height:13.5px;height:13.5px;color:#000;left:1707px;transform:translateX(-50%) scaleX(0.9200);">Y-</div>
<div class="gb" style="left:1737px;top:288px;width:50px;height:50px;"></div>
<div class="t" style="top:306.49px;font-size:13.5px;line-height:13.5px;height:13.5px;color:#000;left:1762px;transform:translateX(-50%) scaleX(0.9200);">Z-</div>
<div class="grnb" style="left:1572px;top:348px;width:50px;height:50px;"></div>
<div class="t" style="top:365.29px;font-size:16px;line-height:16px;height:16px;color:#000;left:1597px;transform:translateX(-50%) scaleX(0.8604);">CONT</div>
<div class="gb" style="left:1627px;top:348px;width:50px;height:50px;"></div>
<div class="t" style="top:365.29px;font-size:16px;line-height:16px;height:16px;color:#000;left:1652px;transform:translateX(-50%) scaleX(0.8613);">STEP</div>
<div class="dark" style="left:1687px;top:361px;width:100px;height:24px;"></div>
<div class="t" style="top:364.10px;font-size:19.5px;line-height:19.5px;height:19.5px;color:#d8d8d8;left:1736px;transform:translateX(-50%) scaleX(0.9722);">0.0001</div>
<div class="gb" style="left:1792px;top:348px;width:50px;height:50px;"></div>
<div class="t" style="top:365.29px;font-size:16px;line-height:16px;height:16px;color:#000;left:1817px;transform:translateX(-50%) scaleX(0.9070);">INC</div>
<div style="left:1533px;top:417px;width:337px;height:6px;background:#10a8cc;border-radius:3px;"></div>
<div style="left:1856px;top:408px;width:25px;height:25px;background:#fff;border-radius:50%;border:1px solid #222;"></div>
<div class="grp" style="left:1518px;top:476px;width:379px;height:349px;"></div>
<div class="t" style="top:469.98px;font-size:12.5px;line-height:12.5px;height:12.5px;color:#fff;font-weight:700;left:1525px;transform-origin:0 50%;transform:scaleX(0.9650);background:#47515c;padding:0 1px;">Calculator</div>
<div class="blue" style="left:1527px;top:490px;width:360px;height:26px;"></div>
<div class="t" style="top:492.84px;font-size:19px;line-height:19px;height:19px;color:#111;left:1707px;transform:translateX(-50%) scaleX(0.9200);">0</div>
<div class="gb" style="left:1527px;top:526px;width:82px;height:50px;"></div>
<div class="t" style="top:543.29px;font-size:16px;line-height:16px;height:16px;color:#000;left:1568.0px;transform:translateX(-50%) scaleX(0.9200);">CE</div>
<div class="gb" style="left:1619px;top:526px;width:82px;height:50px;"></div>
<div class="t" style="top:543.29px;font-size:16px;line-height:16px;height:16px;color:#000;left:1660.0px;transform:translateX(-50%) scaleX(0.9200);">C</div>
<div class="gb" style="left:1711px;top:526px;width:83px;height:50px;"></div>
<div class="t" style="top:543.29px;font-size:16px;line-height:16px;height:16px;color:#000;left:1752.5px;transform:translateX(-50%) scaleX(0.9838);">Backspace</div>
<div class="gb" style="left:1804px;top:526px;width:83px;height:50px;"></div>
<div class="t" style="top:543.29px;font-size:16px;line-height:16px;height:16px;color:#000;left:1845.5px;transform:translateX(-50%) scaleX(0.9200);">/</div>
<div class="gb" style="left:1527px;top:586px;width:82px;height:50px;"></div>
<div class="t" style="top:603.29px;font-size:16px;line-height:16px;height:16px;color:#000;left:1568.0px;transform:translateX(-50%) scaleX(0.9200);">7</div>
<div class="gb" style="left:1619px;top:586px;width:82px;height:50px;"></div>
<div class="t" style="top:603.29px;font-size:16px;line-height:16px;height:16px;color:#000;left:1660.0px;transform:translateX(-50%) scaleX(0.9200);">8</div>
<div class="gb" style="left:1711px;top:586px;width:83px;height:50px;"></div>
<div class="t" style="top:603.29px;font-size:16px;line-height:16px;height:16px;color:#000;left:1752.5px;transform:translateX(-50%) scaleX(0.9200);">9</div>
<div class="gb" style="left:1804px;top:586px;width:83px;height:50px;"></div>
<div class="t" style="top:603.29px;font-size:16px;line-height:16px;height:16px;color:#000;left:1845.5px;transform:translateX(-50%) scaleX(0.9200);">x</div>
<div class="gb" style="left:1527px;top:646px;width:82px;height:50px;"></div>
<div class="t" style="top:663.29px;font-size:16px;line-height:16px;height:16px;color:#000;left:1568.0px;transform:translateX(-50%) scaleX(0.9200);">4</div>
<div class="gb" style="left:1619px;top:646px;width:82px;height:50px;"></div>
<div class="t" style="top:663.29px;font-size:16px;line-height:16px;height:16px;color:#000;left:1660.0px;transform:translateX(-50%) scaleX(0.9200);">5</div>
<div class="gb" style="left:1711px;top:646px;width:83px;height:50px;"></div>
<div class="t" style="top:663.29px;font-size:16px;line-height:16px;height:16px;color:#000;left:1752.5px;transform:translateX(-50%) scaleX(0.9200);">6</div>
<div class="gb" style="left:1804px;top:646px;width:83px;height:50px;"></div>
<div class="t" style="top:663.29px;font-size:16px;line-height:16px;height:16px;color:#000;left:1845.5px;transform:translateX(-50%) scaleX(0.9200);">-</div>
<div class="gb" style="left:1527px;top:706px;width:82px;height:50px;"></div>
<div class="t" style="top:723.29px;font-size:16px;line-height:16px;height:16px;color:#000;left:1568.0px;transform:translateX(-50%) scaleX(0.9200);">1</div>
<div class="gb" style="left:1619px;top:706px;width:82px;height:50px;"></div>
<div class="t" style="top:723.29px;font-size:16px;line-height:16px;height:16px;color:#000;left:1660.0px;transform:translateX(-50%) scaleX(0.9200);">2</div>
<div class="gb" style="left:1711px;top:706px;width:83px;height:50px;"></div>
<div class="t" style="top:723.29px;font-size:16px;line-height:16px;height:16px;color:#000;left:1752.5px;transform:translateX(-50%) scaleX(0.9200);">3</div>
<div class="gb" style="left:1804px;top:706px;width:83px;height:50px;"></div>
<div class="t" style="top:723.29px;font-size:16px;line-height:16px;height:16px;color:#000;left:1845.5px;transform:translateX(-50%) scaleX(0.9200);">+</div>
<div class="gb" style="left:1527px;top:766px;width:82px;height:50px;"></div>
<div class="t" style="top:783.29px;font-size:16px;line-height:16px;height:16px;color:#000;left:1568.0px;transform:translateX(-50%) scaleX(0.9200);">+/-</div>
<div class="gb" style="left:1619px;top:766px;width:82px;height:50px;"></div>
<div class="t" style="top:783.29px;font-size:16px;line-height:16px;height:16px;color:#000;left:1660.0px;transform:translateX(-50%) scaleX(0.9200);">0</div>
<div class="gb" style="left:1711px;top:766px;width:83px;height:50px;"></div>
<div class="t" style="top:783.29px;font-size:16px;line-height:16px;height:16px;color:#000;left:1752.5px;transform:translateX(-50%) scaleX(0.9200);">.</div>
<div class="gb" style="left:1804px;top:766px;width:83px;height:50px;"></div>
<div class="t" style="top:783.29px;font-size:16px;line-height:16px;height:16px;color:#000;left:1845.5px;transform:translateX(-50%) scaleX(0.9200);">=</div>
<div class="grp" style="left:1518px;top:850px;width:379px;height:190px;border-bottom:none;height:171px;border-radius:7px 7px 0 0;"></div>
<div class="t" style="top:842.98px;font-size:12.5px;line-height:12.5px;height:12.5px;color:#fff;font-weight:700;left:1525px;transform-origin:0 50%;transform:scaleX(0.9600);background:#47515c;padding:0 1px;">Notepad</div>
<div style="left:1527px;top:863px;width:343px;height:157px;background:#58748b;"></div>
<div style="left:1870px;top:863px;width:17px;height:157px;background:#f0f0f0;"></div>
<svg style="left:1870px;top:863px" width="17" height="157" viewBox="0 0 17 157"><path d="M4.5 11.5 L8.5 6.5 L12.5 11.5 Z M4.5 147 L12.5 147 L8.5 152.5 Z" fill="#a0a0a0"/></svg>
</body></html>
